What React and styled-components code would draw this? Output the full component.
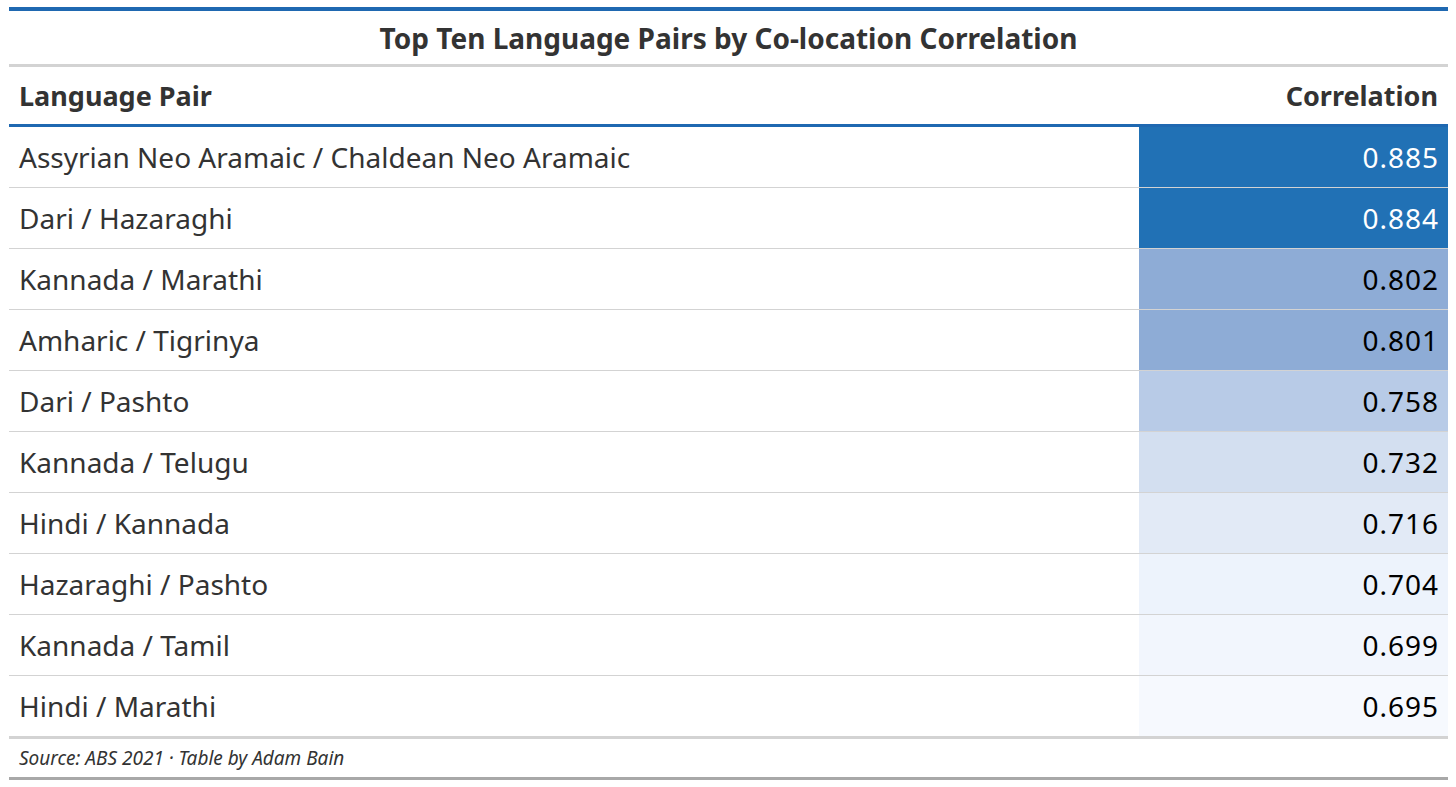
import { createGlobalStyle } from 'styled-components';
import styled from 'styled-components';

const GlobalStyle = createGlobalStyle`
  body {
    margin: 0;
    background: #ffffff;
    font-family: "Noto Sans", "Open Sans", sans-serif;
    color: #333333;
  }
`;

const rows = [
  ['Assyrian Neo Aramaic / Chaldean Neo Aramaic', '0.885', '#2171b5', '#ffffff'],
  ['Dari / Hazaraghi', '0.884', '#2171b5', '#ffffff'],
  ['Kannada / Marathi', '0.802', '#8eacd6', '#000000'],
  ['Amharic / Tigrinya', '0.801', '#8eacd6', '#000000'],
  ['Dari / Pashto', '0.758', '#b8cbe7', '#000000'],
  ['Kannada / Telugu', '0.732', '#d3dff0', '#000000'],
  ['Hindi / Kannada', '0.716', '#e2eaf6', '#000000'],
  ['Hazaraghi / Pashto', '0.704', '#edf3fc', '#000000'],
  ['Kannada / Tamil', '0.699', '#f2f6fd', '#000000'],
  ['Hindi / Marathi', '0.695', '#f6f9fe', '#000000'],
];

const Wrap = styled.div`
  padding: 7px 0 0 9px;
`;

const Table = styled.table`
  width: 1439px;
  border-collapse: collapse;
  border-top: 4px solid #1f68b1;
  border-bottom: 3px solid #a8a8a8;
`;

const Title = styled.th`
  height: 53px;
  padding: 0;
  font-size: 28px;
  font-weight: 700;
  color: #333333;
  text-align: center;
  border-bottom: 3px solid #d3d3d3;
`;

const Head = styled.th`
  height: 57px;
  padding: 0 10px;
  font-size: 27px;
  font-weight: 700;
  color: #333333;
  text-align: ${p => (p.$right ? 'right' : 'left')};
  border-bottom: 3px solid #1f68b1;
`;

const Row = styled.tr`
  border-top: 1px solid #d3d3d3;
  &:first-child { border-top: none; }
`;

const Cell = styled.td`
  height: 60px;
  padding: 0 10px;
  font-size: 28px;
  color: #333333;
  text-align: left;
`;

const ValueCell = styled.td`
  width: 290px;
  height: 60px;
  padding: 0 9px 0 10px;
  font-size: 28px;
  letter-spacing: 1px;
  text-align: right;
  background: ${p => p.$bg};
  color: ${p => p.$fg};
`;

const Foot = styled.td`
  height: 38px;
  padding: 0 10px;
  font-size: 19px;
  font-style: italic;
  color: #333333;
  border-top: 3px solid #d3d3d3;
`;

export default function App() {
  return (
    <Wrap>
      <GlobalStyle />
      <Table>
        <thead>
          <tr>
            <Title colSpan={2}>Top Ten Language Pairs by Co-location Correlation</Title>
          </tr>
          <tr>
            <Head>Language Pair</Head>
            <Head $right>Correlation</Head>
          </tr>
        </thead>
        <tbody>
          {rows.map(([pair, value, bg, fg]) => (
            <Row key={pair}>
              <Cell>{pair}</Cell>
              <ValueCell $bg={bg} $fg={fg}>{value}</ValueCell>
            </Row>
          ))}
        </tbody>
        <tfoot>
          <tr>
            <Foot colSpan={2}>Source: ABS 2021 · Table by Adam Bain</Foot>
          </tr>
        </tfoot>
      </Table>
    </Wrap>
  );
}
